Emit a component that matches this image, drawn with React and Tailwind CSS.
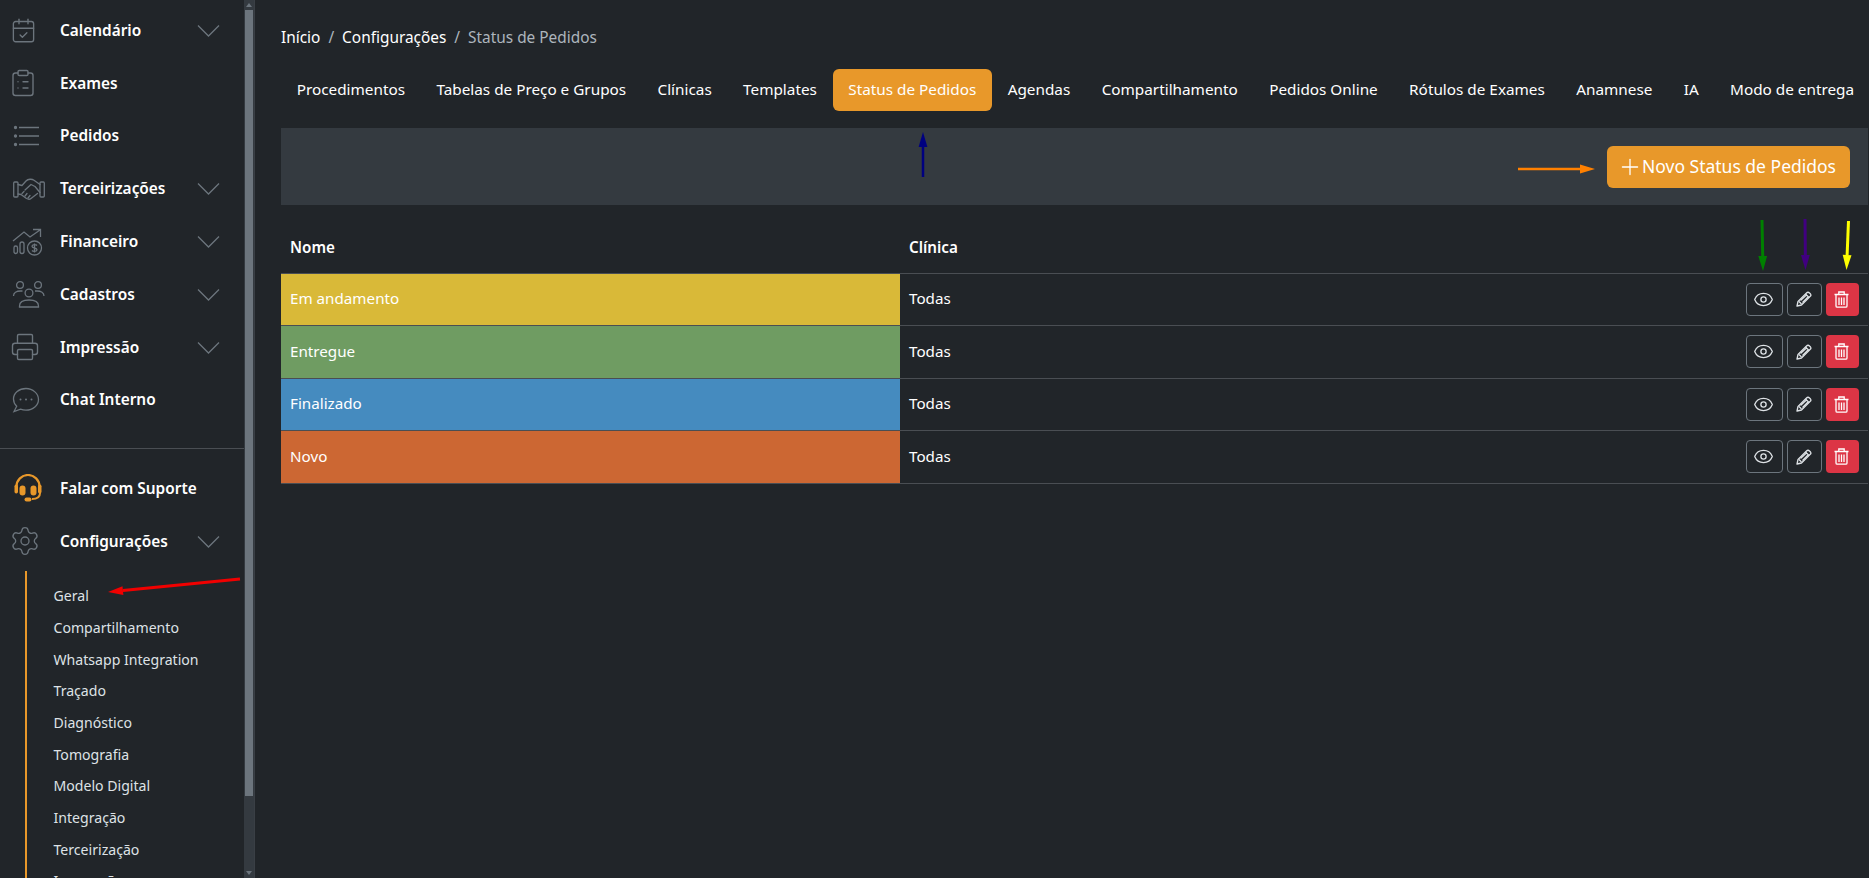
import React from "react";
import { CalendarCheck, ClipboardList, Settings, Printer, Plus, Eye } from "lucide-react";

const Chevron = () => (
  <svg width="23" height="13" viewBox="0 0 23 13" fill="none" stroke="#6c757d" strokeWidth="1.3" className="ml-auto mr-[24px]">
    <path d="M1 1.500 11.500 12 22 1.500" />
  </svg>
);

const ListIcon = () => (
  <svg width="28" height="28" viewBox="0 0 28 28" fill="none" stroke="#6c757d" strokeWidth="1.3" className="ml-[13px]">
    <path d="M6 5.500h20M6 14h20M6 22.500h20" />
    <circle cx="2.500" cy="5.500" r="1" fill="#6c757d" />
    <circle cx="2.500" cy="14" r="1" fill="#6c757d" />
    <circle cx="2.500" cy="22.500" r="1" fill="#6c757d" />
  </svg>
);

const HandshakeIcon = () => (
  <svg width="32" height="22" viewBox="0 0 32 22" fill="none" stroke="#6c757d" strokeWidth="1.3" strokeLinejoin="round" strokeLinecap="round" className="ml-[13px]">
    <rect x="0.700" y="4" width="4.300" height="15" rx="1" />
    <rect x="27" y="4" width="4.300" height="15" rx="1" />
    <path d="M5 6.500 9 7.500 13 3C15 .8 19 .8 21 2.200L27 6.500" />
    <path d="M12 12 18 6.500 22 8.500 27 14.500" />
    <path d="M5 16 8 16.500 13.500 20.500C15 21.300 17 21.300 18 20.500L24.500 15.500" />
    <path d="M9 15.500 11 13.500M12 18 14 15.500M15 20 17 17.500" />
  </svg>
);

const FinanceIcon = () => (
  <svg width="31" height="28" viewBox="0 0 31 28" fill="none" stroke="#6c757d" strokeWidth="1.3" className="ml-[12px]">
    <path d="M1 13 12 4l6 5L28 2M21 1.500h7.500V9" />
    <rect x="2" y="18" width="3.500" height="7.500" rx="1.700" />
    <rect x="8" y="14" width="4" height="11.500" rx="2" />
    <circle cx="22.500" cy="20" r="7" />
    <path d="M25 17.500c-1-1.200-5-1.200-5 .8 0 2.400 5 1 5 3.400 0 2-4 2-5 .8M22.500 15.500v9" />
  </svg>
);

const PeopleIcon = () => (
  <svg width="33" height="28" viewBox="0 0 33 28" fill="none" stroke="#6c757d" strokeWidth="1.3" className="ml-[12px]">
    <circle cx="8" cy="5" r="3.400" />
    <circle cx="26" cy="5" r="3.400" />
    <circle cx="17" cy="13" r="3.900" />
    <path d="M1.500 16c0-3 3-5 7-5h2M32 16c0-3-3-5-7-5h-2M7.500 27v-1c0-4 4-6 9.500-6s9.500 2 9.500 6v1z" />
  </svg>
);

const ChatIcon = () => (
  <svg width="28" height="26" viewBox="0 0 28 26" fill="none" stroke="#6c757d" strokeWidth="1.3" className="ml-[12px]">
    <path d="M14 1.500C7 1.500 1.500 6 1.500 12c0 2.800 1.200 5.300 3.200 7.200L2 24.500l6.500-2.300c1.700.7 3.500 1 5.500 1 7 0 12.500-5 12.500-10.700S21 1.500 14 1.500Z" />
    <circle cx="8.500" cy="12.500" r="1" fill="#6c757d" stroke="none" />
    <circle cx="14" cy="12.500" r="1" fill="#6c757d" stroke="none" />
    <circle cx="19.500" cy="12.500" r="1" fill="#6c757d" stroke="none" />
  </svg>
);

const HeadsetIcon = () => (
  <svg width="28" height="28" viewBox="0 0 28 28" fill="none" className="ml-[14px]">
    <path d="M2.500 15V12.500a11.500 11.500 0 0 1 23 0V15" stroke="#e8982a" strokeWidth="2.200" />
    <rect x="0.500" y="10.500" width="3.500" height="9" rx="1.700" fill="#e8982a" />
    <rect x="24" y="10.500" width="3.500" height="9" rx="1.700" fill="#e8982a" />
    <rect x="5.500" y="11.500" width="6" height="10" rx="3" fill="#e8982a" />
    <rect x="16.500" y="11.500" width="6" height="10" rx="3" fill="#e8982a" />
    <path d="M26 19c0 4.500-3 6-8 6" stroke="#e8982a" strokeWidth="2" />
    <rect x="10.500" y="23.500" width="7" height="4" rx="2" fill="#e8982a" />
  </svg>
);

const PencilIcon = () => (
  <svg width="16" height="16" viewBox="0 0 16 16" fill="none" stroke="#dee2e6" strokeWidth="1.300" strokeLinejoin="round">
    <path d="M1 15 2 10.500 10.500 2C11.500 1 12.500 1 13.500 2L14.500 3C15.200 4 15 4.800 14 5.500L5.500 14Z" />
    <path d="M9.500 3 13 6.500M3 10.500 5.500 13M4.500 9.500 11 3.500M6.500 11.500 12.500 5.500" />
  </svg>
);

const TrashIcon = () => (
  <svg width="15" height="17" viewBox="0 0 15 17" fill="none" stroke="#fff" strokeWidth="1.300">
    <path d="M.5 3.500h14M4.800 3.200V1h5.400v2.200" />
    <path d="M2 4v11a1.200 1.200 0 0 0 1.200 1.200h8.600A1.200 1.200 0 0 0 13 15V4" />
    <path d="M5 6.500v7.500M7.500 6.500v7.500M10 6.500v7.500" />
  </svg>
);

const nav = [
  { icon: <CalendarCheck size={27} strokeWidth={1.2} color="#6c757d" className="ml-[10px]" />, label: "Calendário", chev: true },
  { icon: <ClipboardList size={30} strokeWidth={1.1} color="#6c757d" className="ml-[8px]" />, label: "Exames" },
  { icon: <ListIcon />, label: "Pedidos" },
  { icon: <HandshakeIcon />, label: "Terceirizações", chev: true },
  { icon: <FinanceIcon />, label: "Financeiro", chev: true },
  { icon: <PeopleIcon />, label: "Cadastros", chev: true },
  { icon: <Printer size={30} strokeWidth={1.1} color="#6c757d" className="ml-[10px]" />, label: "Impressão", chev: true },
  { icon: <ChatIcon />, label: "Chat Interno" },
];

const sub = ["Geral", "Compartilhamento", "Whatsapp Integration", "Traçado", "Diagnóstico", "Tomografia", "Modelo Digital", "Integração", "Terceirização", "Impressão"];

const tabs = ["Procedimentos", "Tabelas de Preço e Grupos", "Clínicas", "Templates", "Status de Pedidos", "Agendas", "Compartilhamento", "Pedidos Online", "Rótulos de Exames", "Anamnese", "IA", "Modo de entrega"];

const rows = [
  ["Em andamento", "bg-[#d9b938]"],
  ["Entregue", "bg-[#6f9c62]"],
  ["Finalizado", "bg-[#458bbf]"],
  ["Novo", "bg-[#cc6733]"],
];

const NavRow = ({ icon, label, chev }) => (
  <div className="flex items-center h-[52.800px] shrink-0">
    <div className="w-[60px] flex items-center shrink-0">{icon}</div>
    <span className="text-[15.400px] font-semibold text-white whitespace-nowrap">{label}</span>
    {chev && <Chevron />}
  </div>
);

const Arrow = ({ x1, y1, x2, y2, color, w = 3, head = 8 }) => {
  const dx = x2 - x1, dy = y2 - y1, len = Math.hypot(dx, dy), ux = dx / len, uy = dy / len;
  const bx = x2 - ux * 15, by = y2 - uy * 15;
  return (
    <>
      <line x1={x1} y1={y1} x2={bx} y2={by} stroke={color} strokeWidth={w} />
      <polygon points={`${x2},${y2} ${bx - uy * head / 2 * 1.1},${by + ux * head / 2 * 1.1} ${bx + uy * head / 2 * 1.1},${by - ux * head / 2 * 1.1}`} fill={color} />
    </>
  );
};

export default function App() {
  return (
    <div className="relative flex h-[878px] w-[1869px] overflow-hidden bg-[#212529] text-white" style={{ fontFamily: '"Noto Sans", sans-serif' }}>
      <aside className="flex w-[255px] shrink-0 border-r border-[#3a3f45]">
        <div className="flex-1 min-w-0 pt-[4px] overflow-hidden">
          {nav.map((n) => <NavRow key={n.label} {...n} />)}
          <div className="mt-[21.500px] mb-[13px] h-px bg-[#4a4e53]" />
          <NavRow icon={<HeadsetIcon />} label="Falar com Suporte" />
          <NavRow icon={<Settings size={32} strokeWidth={1} color="#6c757d" className="ml-[9px]" />} label="Configurações" chev />
          <div className="ml-[25px] mt-[4px] pl-[26.500px] pt-[8.500px] border-l-2 border-[#e8982a]">
            {sub.map((s) => (
              <div key={s} className="h-[31.700px] flex items-center text-[14.100px] text-[#dee2e6] whitespace-nowrap">{s}</div>
            ))}
          </div>
        </div>
        <div className="w-[10px] shrink-0 bg-[#343a40] flex flex-col items-center">
          <div className="h-[10px] flex items-center"><div className="border-x-[3px] border-x-transparent border-b-[4px] border-b-[#6c757d]" /></div>
          <div className="w-[8px] h-[786px] bg-[#6c757d]" />
          <div className="mt-auto h-[10px] flex items-center"><div className="border-x-[3px] border-x-transparent border-t-[4px] border-t-[#6c757d]" /></div>
        </div>
      </aside>

      <main className="flex-1 min-w-0 pl-[26px] pr-px">
        <div className="pt-[26px] h-[69px] flex items-start text-[15.400px] whitespace-nowrap">
          <span>Início</span>
          <span className="px-[8px] text-[#adb5bd]">/</span>
          <span>Configurações</span>
          <span className="px-[8px] text-[#adb5bd]">/</span>
          <span className="text-[#adb5bd]">Status de Pedidos</span>
        </div>
        <div className="flex h-[42px] text-[15.300px] whitespace-nowrap">
          {tabs.map((t) => (
            <div key={t} className={`px-[15.700px] pb-[1px] flex items-center rounded-[6px] ${t === "Status de Pedidos" ? "bg-[#e8982a]" : ""}`}>{t}</div>
          ))}
        </div>
        <div className="mt-[17px] h-[77px] bg-[#343a40] flex items-center justify-end pr-[18px]">
          <button className="h-[42px] w-[243px] rounded-[6px] bg-[#e8982a] flex items-center justify-center text-[17.500px] text-white whitespace-nowrap">
            <Plus size={26} strokeWidth={1.200} className="mr-[-1px] ml-[-4px]" />Novo Status de Pedidos
          </button>
        </div>
        <table className="w-full border-collapse text-[15.200px]">
          <thead>
            <tr className="h-[68px] border-b border-[#4a4e53]">
              <th className="w-[619px] pl-[9px] pt-[17px] text-left font-semibold">Nome</th>
              <th className="pl-[9px] pt-[17px] text-left font-semibold">Clínica</th>
              <th className="w-[130px]" />
            </tr>
          </thead>
          <tbody>
            {rows.map(([name, bg]) => (
              <tr key={name} className="h-[52.500px] border-b border-[#4a4e53]">
                <td className={`pl-[9px] pr-0 pt-0 pb-[1px] ${bg}`}>{name}</td>
                <td className="pl-[9px] pr-0 pt-0 pb-[1px]">Todas</td>
                <td className="p-0 pr-[9px]">
                  <div className="flex justify-end gap-[4px]">
                    <button className="w-[37px] h-[33px] pr-[2px] rounded-[4px] border border-[#6c757d] flex items-center justify-center"><Eye size={21} strokeWidth={1.500} color="#dee2e6" /></button>
                    <button className="w-[35px] h-[33px] pr-[2px] rounded-[4px] border border-[#6c757d] flex items-center justify-center"><PencilIcon /></button>
                    <button className="w-[33px] h-[33px] pr-[2px] rounded-[4px] bg-[#dc3545] flex items-center justify-center"><TrashIcon /></button>
                  </div>
                </td>
              </tr>
            ))}
          </tbody>
        </table>
      </main>

      <svg className="absolute inset-0 pointer-events-none" width="1869" height="878">
        <Arrow x1={240} y1={579} x2={108} y2={592} color="#f00000" />
        <Arrow x1={923} y1={177} x2={923} y2={132} color="#000080" w={2.500} />
        <Arrow x1={1518} y1={169} x2={1595} y2={169} color="#ff8000" w={2.500} />
        <Arrow x1={1762} y1={220} x2={1763} y2={271} color="#008000" />
        <Arrow x1={1805} y1={219} x2={1805.500} y2={270} color="#400080" />
        <Arrow x1={1848.500} y1={221} x2={1846.500} y2={270} color="#ffff00" />
      </svg>
    </div>
  );
}
